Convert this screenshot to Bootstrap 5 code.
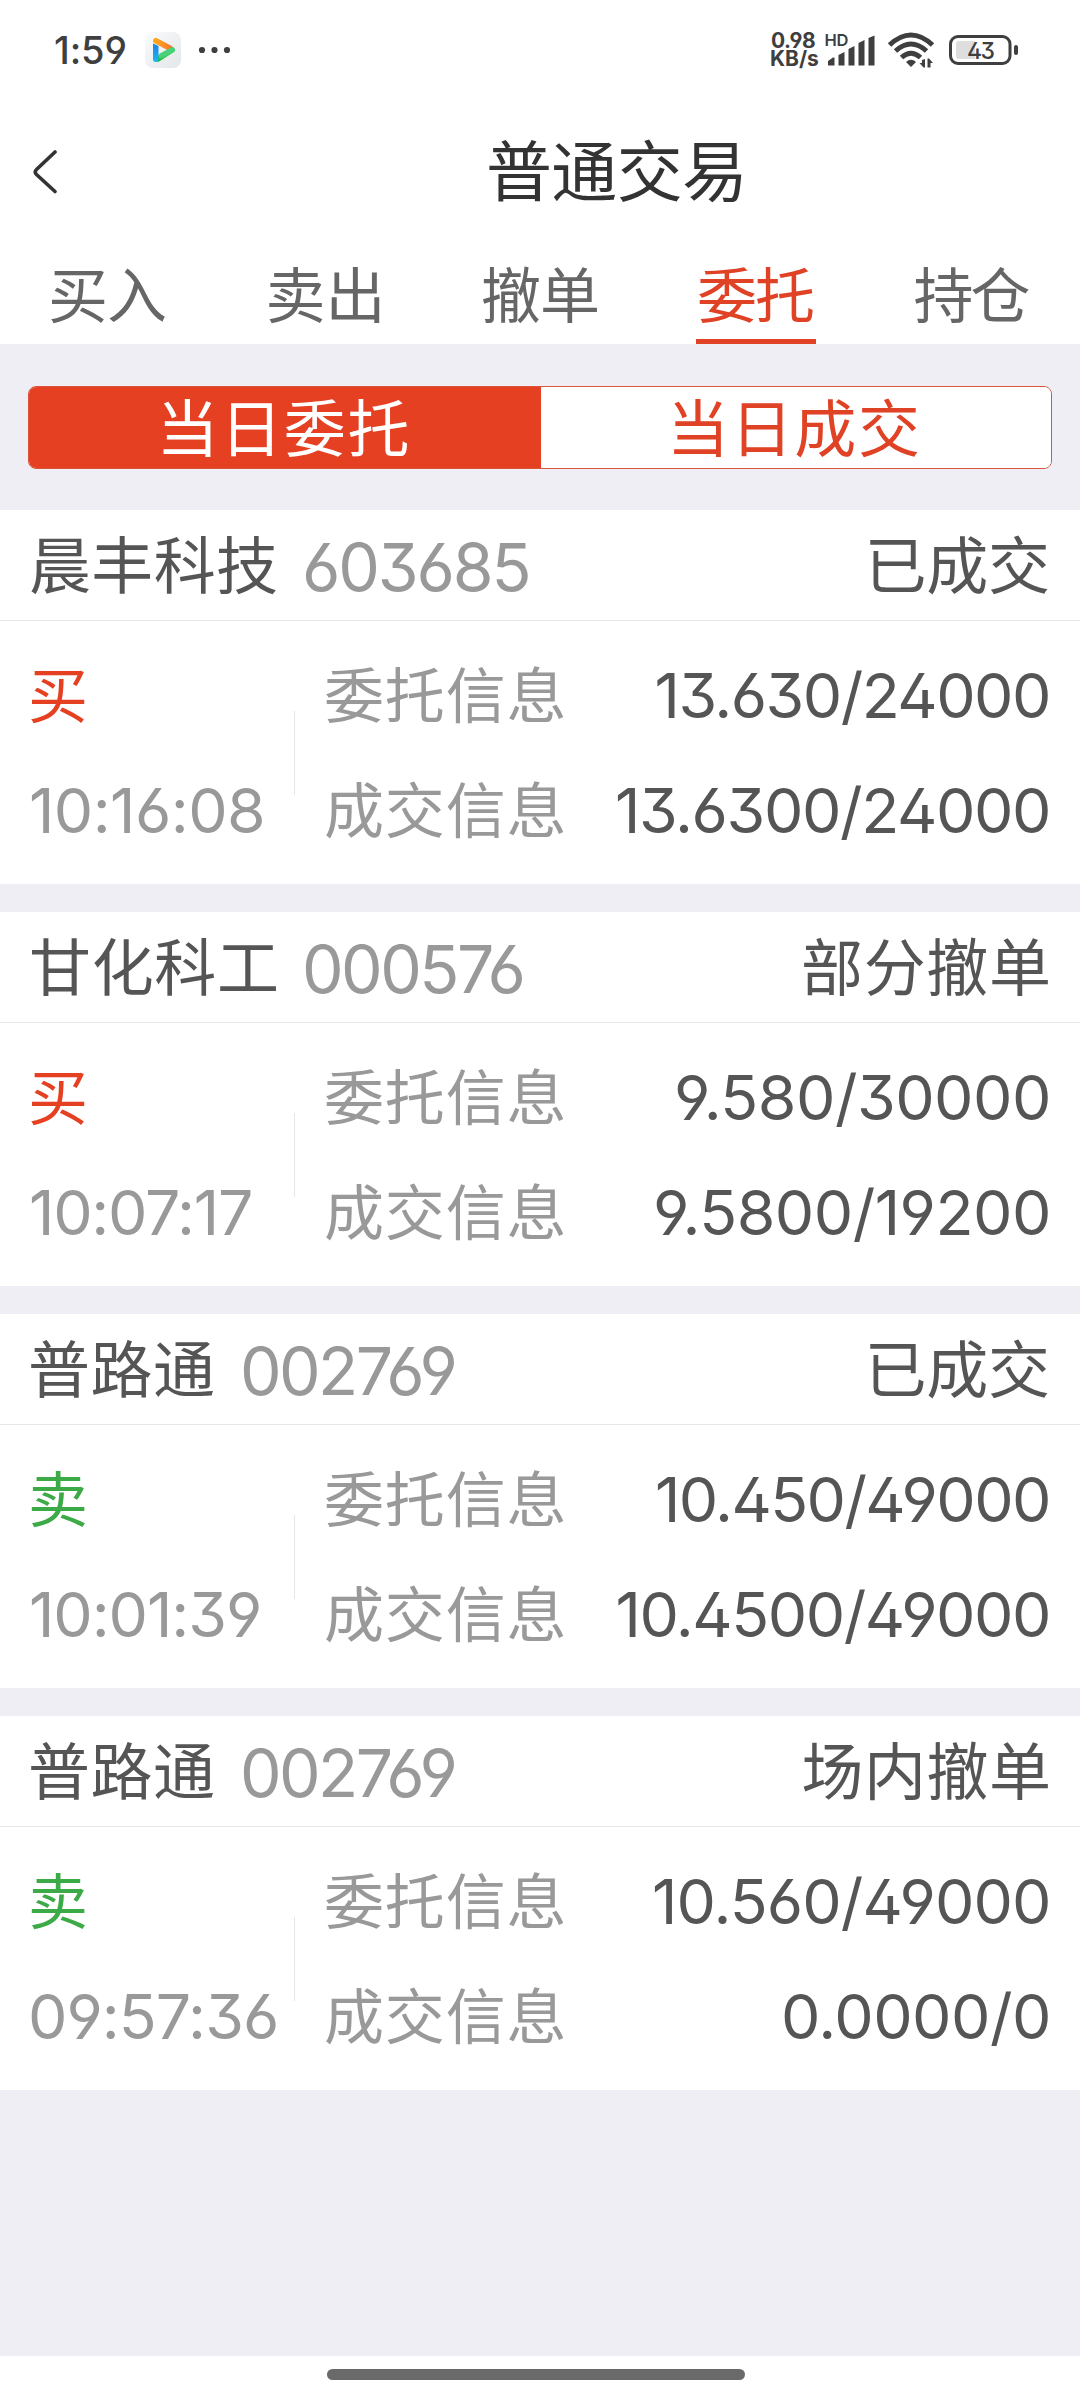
<!DOCTYPE html>
<html lang="zh-CN">
<head>
<meta charset="utf-8">
<meta name="viewport" content="width=device-width, initial-scale=1">
<title>普通交易</title>
<link rel="stylesheet" href="https://cdn.jsdelivr.net/npm/bootstrap@5.3.0/dist/css/bootstrap.min.css">
<style>
:root{--accent:#e64022;--ink:#555;--soft:#999;--page:#efeef4}
body{width:1080px;height:2400px;overflow:hidden;background:var(--page);color:var(--ink);font-family:Inter,"Noto Sans CJK SC",sans-serif;font-size:60px;line-height:1;font-feature-settings:"ss01","cv09"}
.fit{display:inline-block;white-space:nowrap}
.statusbar{height:100px;padding-left:55px;padding-right:62px;color:#3f3f3f}
.clock{font-size:38px;font-weight:500}
.speed{font-size:21px;line-height:18px;font-weight:700;width:54px}
.appbar{height:140px;padding-left:33px;padding-top:3px;color:#333;font-size:66px}
.appbar .title{margin-left:432px}
.tabs{height:104px;color:#666}
.tabs .nav-link{padding:0;color:inherit;height:104px;border-radius:0}
.tabs .lbl{display:flex;align-items:center;justify-content:center;width:120px;height:104px;padding-top:13px;border-bottom:5px solid transparent}
.tabs .active .lbl{color:#e04226;border-color:#e04226}
.segwrap{height:166px;padding:42px 28px 41px}
.seg{height:83px;border:1px solid #d9553c;border-radius:8px;overflow:hidden}
.seg>*{border:0;border-radius:0;font-size:62px;line-height:1;color:#e04226;background:#fff;padding:5px 0 0}
.seg>.on{background:var(--accent);color:#fff;flex:0 0 513px}
.order{height:374px;background:#fff;margin-bottom:28px}
.order-head{height:111px;padding:3px 32px 0 31px;border-bottom:1px solid #e6e6e6;font-size:62px}
.code{font-size:66px;color:var(--soft);margin-left:29px}
.order-body{padding:17px 32px 0 31px}
.order-body .ln{height:115px;display:flex;align-items:center}
.side{width:263px}
.num{font-size:62.5px}
.vline{width:1px;height:84px;background:#e6e6e6;margin-right:31px}
.buy{color:#e64022}.sell{color:#3caa46}
.info{color:var(--soft)}
.homebar{position:absolute;left:0;top:2356px;width:1080px;height:44px;background:#fff;padding-top:13px}
.homebar i{display:block;width:418px;height:11px;border-radius:6px;background:#6a6a6a;margin-left:327px}
</style>
<script src="https://cdn.jsdelivr.net/npm/bootstrap@5.3.0/dist/js/bootstrap.bundle.min.js"></script>
</head>
<body>
<div class="bg-white">
  <div class="statusbar d-flex align-items-center">
    <span class="fit clock" data-fit="70">1:59</span>
    <svg class="flex-shrink-0" width="90" height="36" viewBox="0 0 90 36" style="margin-left:20px">
      <defs>
        <linearGradient id="tile" x1="0" y1="0" x2="1" y2="1"><stop offset="0" stop-color="#fafbfc"/><stop offset="1" stop-color="#e3e6ea"/></linearGradient>
        <linearGradient id="or" x1="0" y1="0" x2="1" y2="0"><stop offset="0" stop-color="#ffa71c"/><stop offset="1" stop-color="#f47b2c"/></linearGradient>
        <linearGradient id="bl" x1="0" y1="0" x2="0" y2="1"><stop offset="0" stop-color="#1b7fe0"/><stop offset="1" stop-color="#1cb8f5"/></linearGradient>
        <linearGradient id="gr" x1="1" y1="0" x2="0" y2="1"><stop offset="0" stop-color="#4bd07a"/><stop offset="1" stop-color="#14c230"/></linearGradient>
      </defs>
      <rect width="36" height="36" rx="8" fill="url(#tile)"/>
      <path d="M13 27L27.300 18" stroke="url(#gr)" stroke-width="5.500" stroke-linecap="round"/>
      <path d="M10.800 8.700L25 16.200" stroke="url(#or)" stroke-width="5.500" stroke-linecap="round"/>
      <path d="M16 23.800L27.300 17.800" stroke="#4bd07a" stroke-width="5" stroke-linecap="round"/>
      <path d="M8 11.500L13.500 14V27.300a2.750 2.750 0 0 1-5.500 0Z" fill="url(#bl)"/>
      <g fill="#3f3f3f"><circle cx="57" cy="18" r="3.100"/><circle cx="69.500" cy="18" r="3.100"/><circle cx="82" cy="18" r="3.100"/></g>
    </svg>
    <div class="d-flex align-items-center ms-auto">
      <div class="speed"><div><span class="fit" data-fit="44">0.98</span></div><div><span class="fit" data-fit="47">KB/s</span></div></div>
      <svg width="193" height="40" viewBox="825 30 193 40" fill="#3f3f3f">
        <text x="824.500" y="46" font-size="16.500" font-weight="600" textLength="24" font-family="Inter,sans-serif">HD</text>
        <path d="M828 65.500V61l5-3.500h1.500v8Z M838.500 65.500V55l6-3v13.500Z M848.500 65.500V49l6-3v19.500Z M858.500 65.500V43l6-3v25.500Z M868.500 65.500V38l6-2.500v30Z"/>
        <g fill="none" stroke="#3f3f3f" stroke-width="5"><path d="M889.500 45Q911 25 932.500 45"/><path d="M895.500 51Q911 37 926.500 51"/><path d="M901.500 57.500Q911 49 920.500 57.500"/></g>
        <path d="M906 62Q911 57.500 916 62L911 67Z"/>
        <path d="M919.500 63h2.500v-3l3-1v8.500h-1.500Z M927.500 58.500h1.500l4 4.500h-2.500v4.500h-3Z"/>
        <rect x="950.500" y="36.500" width="59.500" height="27" rx="7.500" fill="none" stroke="#3f3f3f" stroke-width="3"/>
        <path d="M959 41h16v18h-16a3 3 0 0 1-3-3v-12a3 3 0 0 1 3-3Z" fill="#dedede"/>
        <rect x="1014" y="45" width="4" height="10" rx="2"/>
        <text x="967" y="58.500" font-size="23" font-weight="500" textLength="28" font-family="Inter,sans-serif">43</text>
      </svg>
    </div>
  </div>
  <header class="appbar d-flex align-items-center">
    <svg width="24" height="44" viewBox="0 0 24 44" fill="none" stroke="#333" stroke-width="3.600" stroke-linecap="round"><path d="M22 2L3.500 19.500q-2.500 2.500 0 5L22 41.500"/></svg>
    <span class="fit title" data-fit="253">普通交易</span>
  </header>
  <nav class="tabs nav nav-justified">
    <a class="nav-link d-flex justify-content-center"><span class="lbl"><span class="fit" data-fit="114">买入</span></span></a>
    <a class="nav-link d-flex justify-content-center"><span class="lbl"><span class="fit" data-fit="111">卖出</span></span></a>
    <a class="nav-link d-flex justify-content-center"><span class="lbl"><span class="fit" data-fit="114">撤单</span></span></a>
    <a class="nav-link active d-flex justify-content-center"><span class="lbl"><span class="fit" data-fit="114">委托</span></span></a>
    <a class="nav-link d-flex justify-content-center"><span class="lbl"><span class="fit" data-fit="115">持仓</span></span></a>
  </nav>
</div>
<div class="segwrap">
  <div class="seg btn-group d-flex">
    <button class="btn on"><span class="fit" data-fit="244">当日委托</span></button>
    <button class="btn"><span class="fit" data-fit="244">当日成交</span></button>
  </div>
</div>
<main>
  <section class="order">
    <div class="order-head d-flex align-items-center"><span class="fit" data-fit="245">晨丰科技</span><span class="code"><span class="fit" data-fit="223.5">603685</span></span><span class="fit ms-auto" data-fit="178.5">已成交</span></div>
    <div class="order-body d-flex align-items-center">
      <div class="side info"><div class="ln buy"><span class="fit" data-fit="53">买</span></div><div class="ln num"><span class="fit" data-fit="231">10:16:08</span></div></div>
      <div class="vline"></div>
      <div class="flex-fill">
        <div class="ln justify-content-between"><span class="fit info" data-fit="237.5">委托信息</span><span class="num"><span class="fit" data-fit="391.5">13.630/24000</span></span></div>
        <div class="ln justify-content-between"><span class="fit info" data-fit="237.5">成交信息</span><span class="num"><span class="fit" data-fit="431">13.6300/24000</span></span></div>
      </div>
    </div>
  </section>
  <section class="order">
    <div class="order-head d-flex align-items-center"><span class="fit" data-fit="245">甘化科工</span><span class="code"><span class="fit" data-fit="217">000576</span></span><span class="fit ms-auto" data-fit="244">部分撤单</span></div>
    <div class="order-body d-flex align-items-center">
      <div class="side info"><div class="ln buy"><span class="fit" data-fit="53">买</span></div><div class="ln num"><span class="fit" data-fit="220">10:07:17</span></div></div>
      <div class="vline"></div>
      <div class="flex-fill">
        <div class="ln justify-content-between"><span class="fit info" data-fit="237.5">委托信息</span><span class="num"><span class="fit" data-fit="371">9.580/30000</span></span></div>
        <div class="ln justify-content-between"><span class="fit info" data-fit="237.5">成交信息</span><span class="num"><span class="fit" data-fit="392">9.5800/19200</span></span></div>
      </div>
    </div>
  </section>
  <section class="order">
    <div class="order-head d-flex align-items-center"><span class="fit" data-fit="183">普路通</span><span class="code"><span class="fit" data-fit="211">002769</span></span><span class="fit ms-auto" data-fit="178.5">已成交</span></div>
    <div class="order-body d-flex align-items-center">
      <div class="side info"><div class="ln sell"><span class="fit" data-fit="53">卖</span></div><div class="ln num"><span class="fit" data-fit="228.5">10:01:39</span></div></div>
      <div class="vline"></div>
      <div class="flex-fill">
        <div class="ln justify-content-between"><span class="fit info" data-fit="237.5">委托信息</span><span class="num"><span class="fit" data-fit="391">10.450/49000</span></span></div>
        <div class="ln justify-content-between"><span class="fit info" data-fit="237.5">成交信息</span><span class="num"><span class="fit" data-fit="430.5">10.4500/49000</span></span></div>
      </div>
    </div>
  </section>
  <section class="order">
    <div class="order-head d-flex align-items-center"><span class="fit" data-fit="183">普路通</span><span class="code"><span class="fit" data-fit="211">002769</span></span><span class="fit ms-auto" data-fit="244.5">场内撤单</span></div>
    <div class="order-body d-flex align-items-center">
      <div class="side info"><div class="ln sell"><span class="fit" data-fit="53">卖</span></div><div class="ln num"><span class="fit" data-fit="245.5">09:57:36</span></div></div>
      <div class="vline"></div>
      <div class="flex-fill">
        <div class="ln justify-content-between"><span class="fit info" data-fit="237.5">委托信息</span><span class="num"><span class="fit" data-fit="394">10.560/49000</span></span></div>
        <div class="ln justify-content-between"><span class="fit info" data-fit="237.5">成交信息</span><span class="num"><span class="fit" data-fit="264">0.0000/0</span></span></div>
      </div>
    </div>
  </section>
</main>
<div class="homebar"><i></i></div>
<script>
// Track each label so its visible glyphs span data-fit pixels, and trim the side bearings.
const ctx = document.createElement('canvas').getContext('2d');
document.querySelectorAll('.fit').forEach(el => {
  const cs = getComputedStyle(el), auto = el.classList.contains('ms-auto');
  ctx.font = `${cs.fontWeight} ${cs.fontSize} ${cs.fontFamily}`;
  const m = ctx.measureText(el.textContent), n = el.textContent.length;
  const adv = el.getBoundingClientRect().width;
  const right = m.actualBoundingBoxRight + adv - m.width;
  const ink = right + m.actualBoundingBoxLeft;
  const sp = n > 1 ? (el.dataset.fit - ink) / (n - 1) : 0;
  el.style.letterSpacing = sp + 'px';
  if (!auto) el.style.marginLeft = (parseFloat(cs.marginLeft) + m.actualBoundingBoxLeft) + 'px';
  el.style.marginRight = (right - adv - sp) + 'px';
});
</script>
</body>
</html>
